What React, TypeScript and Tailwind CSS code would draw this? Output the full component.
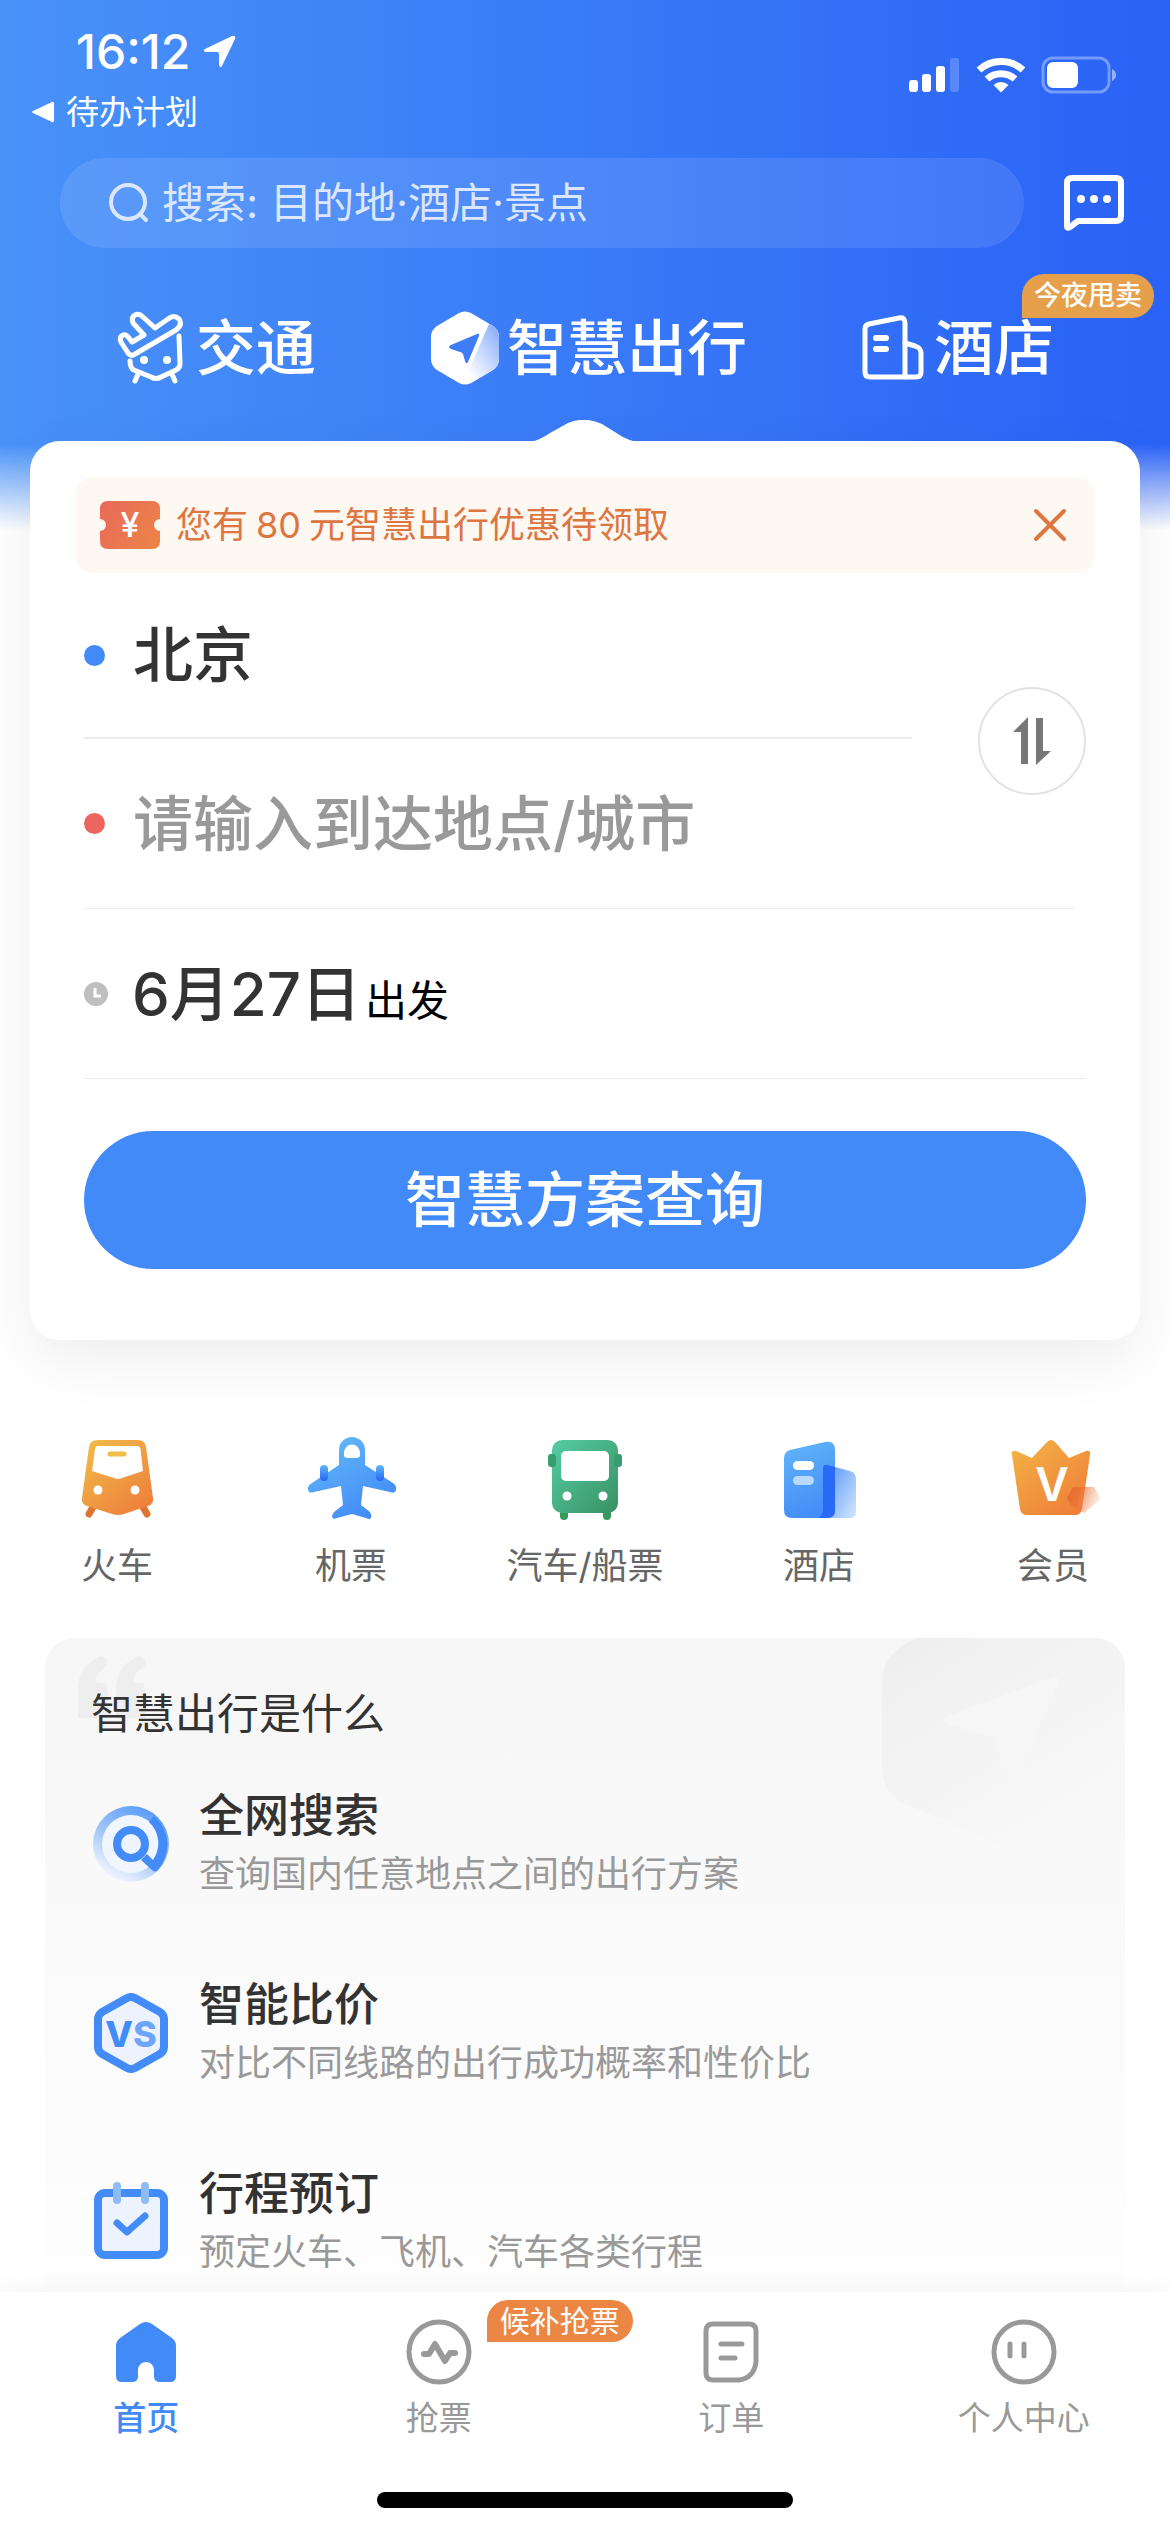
import { useState } from "react";
import type { ReactNode } from "react";

interface Service {
  label: string;
  icon: ReactNode;
}

interface Feature {
  title: string;
  text: string;
  icon: ReactNode;
}

interface Tab {
  label: string;
  icon: ReactNode;
  badge?: string;
}

function StatusIcons() {
  return (
    <svg width="210" height="38" viewBox="0 0 210 38" fill="#fff" aria-hidden="true">
      <rect x="1" y="24" width="9" height="12" rx="3" />
      <rect x="14" y="18" width="9" height="18" rx="3" />
      <rect x="28" y="10" width="9" height="26" rx="3" />
      <rect x="42" y="2" width="9" height="34" rx="3" opacity="0.2" />
      <g fill="none" stroke="#fff" strokeWidth="7">
        <path d="M71 14 A33 33 0 0 1 115 14" />
        <path d="M79 23 A21 21 0 0 1 107 23" />
      </g>
      <path d="M93 36.500 L85.500 29 A11 11 0 0 1 100.500 29Z" />
      <rect x="135" y="2" width="66" height="34" rx="10" fill="none" stroke="#fff" strokeWidth="3" opacity="0.35" />
      <rect x="139" y="6" width="31" height="26" rx="6" />
      <path d="M204 13 Q208 15 208 19 Q208 23 204 25Z" opacity="0.5" />
    </svg>
  );
}

function SearchIcon() {
  return (
    <svg width="42" height="42" viewBox="0 0 42 42" fill="none" stroke="#dbe7ff" strokeWidth="4" strokeLinecap="round" aria-hidden="true">
      <circle cx="20" cy="20" r="17" />
      <path d="M32 32 L38 38" />
    </svg>
  );
}

function MessageIcon() {
  return (
    <svg width="60" height="56" viewBox="0 0 60 56" fill="#fff" aria-hidden="true">
      <path
        d="M3 51 V8 Q3 3 8 3 H52 Q57 3 57 8 V41 Q57 46 52 46 H14 L6 52 Q3 54 3 51Z"
        fill="none"
        stroke="#fff"
        strokeWidth="6"
        strokeLinejoin="round"
      />
      <circle cx="17" cy="24" r="4" />
      <circle cx="30" cy="24" r="4" />
      <circle cx="43" cy="24" r="4" />
    </svg>
  );
}

function TrafficIcon() {
  return (
    <svg width="70" height="74" viewBox="0 0 70 74" fill="none" stroke="#fff" strokeWidth="5" strokeLinecap="round" strokeLinejoin="round" aria-hidden="true">
      <path d="M39 17 L52 8 Q58 3 63 8 Q67 14 60 19 L19 43 Q15 46 12 42 L5 31 Q3 26 7 24 Q10 23 13 27 L16 31 L28 24 L17 12 Q15 6 19 4 Q23 2 27 6Z" />
      <path d="M63 25 L64 53 Q64 57 60 59 L45 66 Q40 69 35 66 L18 59 Q14 57 14 50" />
      <path d="M22 63 L19 70" />
      <path d="M56 63 L59 70" />
      <circle cx="28" cy="49" r="4" fill="#fff" stroke="none" />
      <circle cx="51" cy="49" r="4" fill="#fff" stroke="none" />
    </svg>
  );
}

function SmartIcon() {
  return (
    <svg width="68" height="74" viewBox="0 0 68 74" aria-hidden="true">
      <defs>
        <linearGradient id="smartFold" x1="0.9" y1="0.1" x2="0.2" y2="0.9">
          <stop offset="0" stopColor="#8fb3fb" />
          <stop offset="0.5" stopColor="#c9dafd" />
          <stop offset="1" stopColor="#fff" />
        </linearGradient>
      </defs>
      <path
        d="M28 2 Q34 -1 40 2 L62 15 Q68 19 68 26 V48 Q68 55 62 59 L40 72 Q34 75 28 72 L6 59 Q0 55 0 48 V26 Q0 19 6 15Z"
        fill="#fff"
      />
      <path d="M58 13 L62 15 Q68 19 68 26 V48 Q68 55 62 59 L40 72 L32 72Z" fill="url(#smartFold)" />
      <path d="M46 23 Q49 22 48 25 L37 51 Q35 54 34 50 L32 43 Q31 41 29 41 L20 38 Q16 36 20 34Z" fill="#3f7df6" />
    </svg>
  );
}

function HotelOutlineIcon() {
  return (
    <svg width="62" height="66" viewBox="0 0 62 66" fill="none" stroke="#fff" strokeWidth="5" strokeLinecap="round" strokeLinejoin="round" aria-hidden="true">
      <path d="M3 14 Q3 10 7 9 L37 3 Q43 2 43 8 V62 H8 Q3 62 3 57Z" />
      <path d="M43 28 L53 31 Q59 33 59 38 V57 Q59 62 54 62 H43" />
      <path d="M14 23 H24 M14 34 H24" strokeWidth="6" />
    </svg>
  );
}

function TicketIcon() {
  return (
    <svg width="60" height="48" viewBox="0 0 60 48" aria-hidden="true">
      <defs>
        <linearGradient id="ticket" x1="0" y1="0" x2="1" y2="0.5">
          <stop offset="0" stopColor="#e8695a" />
          <stop offset="1" stopColor="#ec814a" />
        </linearGradient>
      </defs>
      <path
        d="M8 0 H52 Q60 0 60 8 V18 A6 6 0 0 0 60 30 V40 Q60 48 52 48 H8 Q0 48 0 40 V30 A6 6 0 0 0 0 18 V8 Q0 0 8 0Z"
        fill="url(#ticket)"
      />
      <text x="30" y="36" textAnchor="middle" fontSize="34" fontWeight="500" fill="#fff" fontFamily="Inter">
        ¥
      </text>
    </svg>
  );
}

function SwapIcon() {
  return (
    <svg width="44" height="50" viewBox="0 0 44 50" fill="#777" aria-hidden="true">
      <path d="M18 1 V48 H11 V16 H3Z" />
      <path d="M26 49 V2 H33 V35 H41Z" />
    </svg>
  );
}

function ClockIcon() {
  return (
    <svg width="24" height="24" viewBox="0 0 24 24" aria-hidden="true">
      <circle cx="12" cy="12" r="12" fill="#bfbfbf" />
      <path d="M11 6 V14 H17" fill="none" stroke="#fff" strokeWidth="3" />
    </svg>
  );
}

const services: Service[] = [
  {
    label: "火车",
    icon: (
      <>
        <linearGradient id="train" x1="0.1" y1="0" x2="0.9" y2="1">
          <stop offset="0" stopColor="#f1bb48" />
          <stop offset="1" stopColor="#ee7c3c" />
        </linearGradient>
        <path d="M18 71 L14 78 M68 71 L72 78" stroke="#dd7430" strokeWidth="7" strokeLinecap="round" />
        <path
          d="M23 4 H63 Q70 4 71 11 L78 62 Q79 68 73 70 L49 78 Q43 80 37 78 L12 70 Q6 68 7 62 L14 11 Q15 4 23 4Z"
          fill="url(#train)"
        />
        <path d="M23 10 H62 Q65 10 65.500 13 L68 35 L47 42 Q43 44 39 42 L17 35 L20 13 Q20.500 10 23 10Z" fill="#fff" />
        <path d="M35 18 H49" stroke="#f2bd49" strokeWidth="5" strokeLinecap="round" />
        <circle cx="23" cy="54" r="4.5" fill="#fff" />
        <circle cx="60" cy="54" r="4.5" fill="#fff" />
      </>
    ),
  },
  {
    label: "机票",
    icon: (
      <>
        <linearGradient id="plane" x1="0.2" y1="0" x2="0.8" y2="1">
          <stop offset="0" stopColor="#63b8f8" />
          <stop offset="1" stopColor="#4088f7" />
        </linearGradient>
        <linearGradient id="engine" x1="0" y1="0" x2="0" y2="1">
          <stop offset="0" stopColor="#62b6f8" />
          <stop offset="0.5" stopColor="#3f8df7" />
          <stop offset="1" stopColor="#2764f5" />
        </linearGradient>
        <path
          d="M30 14 A13 13 0 0 1 56 14 V29 L84 47 Q88 50 87 54 Q86 58 81 56 L54 50 L52 69 L61 76 Q63 79 62 82 Q60 84 57 82 L43 78 L28 82 Q24 84 23 81 Q23 78 25 76 L34 69 L32 50 L5 56 Q0 58 -1 54 Q-2 50 3 47 L30 29Z"
          fill="url(#plane)"
        />
        <rect x="11" y="29" width="8" height="16" rx="4" fill="url(#engine)" />
        <rect x="67" y="29" width="8" height="16" rx="4" fill="url(#engine)" />
        <path d="M35 17 A8 8.500 0 0 1 51 17 V19 Q51 22 47 22 H39 Q35 22 35 19Z" fill="#fff" />
      </>
    ),
  },
  {
    label: "汽车/船票",
    icon: (
      <>
        <linearGradient id="bus" x1="0" y1="0" x2="1" y2="1">
          <stop offset="0" stopColor="#55cca4" />
          <stop offset="1" stopColor="#389163" />
        </linearGradient>
        <path d="M21 74 V80 M64 74 V80" stroke="#36995c" strokeWidth="8" strokeLinecap="round" />
        <rect x="9" y="4" width="66" height="73" rx="10" fill="url(#bus)" />
        <rect x="5" y="18" width="8" height="13" rx="3" fill="#379f6f" />
        <rect x="71" y="18" width="8" height="13" rx="3" fill="#379f6f" />
        <rect x="18" y="15" width="48" height="30" rx="5" fill="#fff" />
        <circle cx="24" cy="60" r="4.5" fill="#fff" />
        <circle cx="60" cy="60" r="4.5" fill="#fff" />
      </>
    ),
  },
  {
    label: "酒店",
    icon: (
      <>
        <linearGradient id="tower" x1="0.2" y1="0" x2="0.5" y2="1">
          <stop offset="0" stopColor="#60b3f8" />
          <stop offset="1" stopColor="#438df8" />
        </linearGradient>
        <linearGradient id="annex" x1="0" y1="0" x2="1" y2="1">
          <stop offset="0" stopColor="#5c98f9" />
          <stop offset="1" stopColor="#d3e7fd" />
        </linearGradient>
        <path d="M58 31 L73 35 Q79 37 79 43 V76 Q79 82 73 82 H52Z" fill="url(#annex)" />
        <path d="M7 22 Q7 16 13 14 L48 6 Q58 4 58 14 V74 Q58 82 50 82 H15 Q7 82 7 74Z" fill="url(#tower)" />
        <path d="M46 33 Q46 28 51 29 L58 31 V74 Q58 82 50 82 H41 Q46 79 46 74Z" fill="#2a68f6" />
        <rect x="16" y="25" width="21" height="9" rx="4.5" fill="#fff" />
        <rect x="16" y="40" width="21" height="9" rx="4.5" fill="#fff" opacity="0.6" />
      </>
    ),
  },
  {
    label: "会员",
    icon: (
      <>
        <linearGradient id="crown" x1="0.1" y1="0" x2="0.9" y2="1">
          <stop offset="0" stopColor="#f3b244" />
          <stop offset="1" stopColor="#ee7c39" />
        </linearGradient>
        <linearGradient id="gem" x1="0" y1="0" x2="1" y2="0.3">
          <stop offset="0" stopColor="#ea6728" />
          <stop offset="0.4" stopColor="#ea6f34" stopOpacity="0.75" />
          <stop offset="1" stopColor="#f2a273" stopOpacity="0.2" />
        </linearGradient>
        <path
          d="M5 15 L21 22 L36 6 Q40 2 44 6 L58 22 L75 15 Q80 14 79 19 L71 73 Q70 79 64 79 H16 Q10 79 9 73 L1 19 Q0 14 5 15Z"
          fill="url(#crown)"
        />
        <path d="M62 51 H83 L90 63 L73 77 L60 69 L56 62Z" fill="url(#gem)" />
        <text x="41" y="65" textAnchor="middle" fontSize="46" fontWeight="600" fill="#fff" fontFamily="Inter">
          V
        </text>
      </>
    ),
  },
];

const features: Feature[] = [
  {
    title: "全网搜索",
    text: "查询国内任意地点之间的出行方案",
    icon: (
      <>
        <linearGradient id="ring" x1="0.85" y1="0.1" x2="0.35" y2="1">
          <stop offset="0" stopColor="#5a9cf8" />
          <stop offset="0.55" stopColor="#a3c6f9" />
          <stop offset="1" stopColor="#f2f6fd" />
        </linearGradient>
        <circle cx="40" cy="40" r="38" fill="url(#ring)" />
        <circle cx="40" cy="40" r="29" fill="#f0f5fe" />
        <path d="M63 12 A38 38 0 0 1 67 66 Q64 69 61 66 L50 56 L56 50 L62 56 A29 29 0 0 0 58 18Z" fill="#438cf8" />
        <circle cx="40" cy="40" r="14" fill="#eef4fe" stroke="#438cf8" strokeWidth="8" />
      </>
    ),
  },
  {
    title: "智能比价",
    text: "对比不同线路的出行成功概率和性价比",
    icon: (
      <>
        <path
          d="M36 5 Q40 3 44 5 L69 19 Q73 22 73 26 V54 Q73 58 69 61 L44 75 Q40 77 36 75 L11 61 Q7 58 7 54 V26 Q7 22 11 19Z"
          fill="#edf3fe"
          stroke="#438cf8"
          strokeWidth="8"
        />
        <text x="40" y="54" textAnchor="middle" fontSize="36" fontWeight="800" fill="#438cf8" fontFamily="Inter">
          V<tspan fillOpacity="0.75">S</tspan>
        </text>
      </>
    ),
  },
  {
    title: "行程预订",
    text: "预定火车、飞机、汽车各类行程",
    icon: (
      <>
        <rect x="7" y="11" width="66" height="62" rx="7" fill="#edf3fe" stroke="#438cf8" strokeWidth="8" />
        <path d="M26 4 V18 M54 4 V18" stroke="#8dbcfa" strokeWidth="8" strokeLinecap="round" />
        <path d="M26 41 L36 50 L54 34" fill="none" stroke="#438cf8" strokeWidth="7" strokeLinecap="round" strokeLinejoin="round" />
      </>
    ),
  },
];

const tabs: Tab[] = [
  {
    label: "首页",
    icon: (
      <path
        d="M26 4 Q32 0 38 4 L58 18 Q62 21 62 26 V56 Q62 62 56 62 H46 Q40 62 40 56 V50 A8 8 0 0 0 24 50 V56 Q24 62 18 62 H8 Q2 62 2 56 V26 Q2 21 6 18Z"
        fill="currentColor"
      />
    ),
  },
  {
    label: "抢票",
    badge: "候补抢票",
    icon: (
      <g fill="none" stroke="currentColor" strokeWidth="5" strokeLinecap="round" strokeLinejoin="round">
        <circle cx="32" cy="32" r="30" />
        <path d="M17 34 H22 L28 24 L38 41 L43 33 H48" strokeWidth="6" />
      </g>
    ),
  },
  {
    label: "订单",
    icon: (
      <g fill="none" stroke="currentColor" strokeWidth="5" strokeLinecap="round">
        <path d="M14 4 H50 Q57 4 57 11 V42 Q55 58 40 60 H14 Q7 60 7 53 V11 Q7 4 14 4Z" />
        <path d="M22 24 H43 M22 38 H36" />
      </g>
    ),
  },
  {
    label: "个人中心",
    icon: (
      <g fill="none" stroke="currentColor" strokeWidth="5" strokeLinecap="round">
        <circle cx="32" cy="32" r="30" />
        <path d="M18 24 V36 M32 24 V36" />
      </g>
    ),
  },
];

function Header() {
  return (
    <header className="pb-14 pt-7 text-white">
      <div className="flex items-start justify-between pl-8 pr-13">
        <div className="flex flex-col">
          <div className="flex items-center gap-3 pl-11 text-5xl font-medium leading-12">
            <span>16:12</span>
            <svg width="34" height="34" viewBox="0 0 34 34" fill="#fff" aria-hidden="true">
              <path d="M30 1 Q34 0 33 4 L20 31 Q18 34 17 30 V19 Q17 17 15 17 H4 Q0 16 3 14Z" />
            </svg>
          </div>
          <a href="#back" className="mt-4 flex items-center gap-3 text-[33px] leading-10">
            <svg width="22" height="22" viewBox="0 0 22 22" fill="#fff" aria-hidden="true">
              <path d="M20 1 Q22 0 22 3 V19 Q22 22 20 21 L1 12 Q-1 11 1 10Z" />
            </svg>
            待办计划
          </a>
        </div>
        <div className="pt-7">
          <StatusIcons />
        </div>
      </div>

      <div className="mt-[26px] flex items-center gap-10 pl-15 pr-[46px]">
        <label className="flex h-[90px] flex-1 items-center gap-3 rounded-full bg-white/10 pl-12">
          <SearchIcon />
          <input
            type="search"
            aria-label="搜索"
            placeholder="搜索: 目的地·酒店·景点"
            className="min-w-0 flex-1 bg-transparent text-[42px] leading-15 outline-none placeholder:text-[#dbe7ff]"
          />
        </label>
        <button type="button" aria-label="消息">
          <MessageIcon />
        </button>
      </div>

      <nav className="mt-[63px] flex items-center justify-between px-[116px] text-[60px] font-medium leading-18">
        <a href="#traffic" className="flex items-center gap-[10px]">
          <TrafficIcon />
          交通
        </a>
        <a href="#smart" className="flex items-center gap-2">
          <SmartIcon />
          智慧出行
        </a>
        <a href="#hotel" className="relative flex items-center gap-[10px]">
          <HotelOutlineIcon />
          酒店
          <span className="absolute -right-25 -top-[38px] rounded-3xl rounded-bl-none bg-[#e6a04b] px-3 text-[27px] leading-11">
            今夜甩卖
          </span>
        </a>
      </nav>
    </header>
  );
}

function TripForm() {
  const [from, setFrom] = useState("北京");
  const [to, setTo] = useState("");
  const [noticeOpen, setNoticeOpen] = useState(true);

  function swap() {
    setFrom(to);
    setTo(from);
  }

  return (
    <section className="relative mx-[30px] rounded-[30px] bg-white px-[46px] pb-[71px] pt-9 shadow-[0_20px_60px_rgba(0,0,0,0.07)]">
      <svg className="absolute -top-[21px] left-1/2 -translate-x-1/2" width="110" height="22" viewBox="0 0 110 22" fill="#fff" aria-hidden="true">
        <path d="M0 22 Q10 20 20 13 L38 3 Q55 -4 72 4 L88 14 Q98 21 110 22Z" />
      </svg>

      {noticeOpen && (
        <div className="flex h-24 items-center rounded-2xl bg-[#fdf8f2] px-6 text-[#dd7640]">
          <TicketIcon />
          <p className="ml-4 flex-1 text-[36px] leading-12">
            您有<span className="mx-2">80</span>元智慧出行优惠待领取
          </p>
          <button type="button" aria-label="关闭" onClick={() => setNoticeOpen(false)}>
            <svg width="40" height="40" viewBox="0 0 40 40" stroke="currentColor" strokeWidth="4" strokeLinecap="round" aria-hidden="true">
              <path d="M6 6 L34 34 M34 6 L6 34" />
            </svg>
          </button>
        </div>
      )}

      <form className="px-2" onSubmit={(e) => e.preventDefault()}>
        <div className="relative">
          <label className="mr-[174px] flex h-[166px] items-center gap-7 border-b-2 border-[#ececec]">
            <span className="size-[21px] rounded-full bg-[#428af8]" />
            <input
              aria-label="出发地点"
              value={from}
              onChange={(e) => setFrom(e.target.value)}
              placeholder="请输入出发地点/城市"
              className="min-w-0 flex-1 text-[60px] font-medium leading-20 text-[#333] outline-none placeholder:text-[#999]"
            />
          </label>
          <label className="mr-3 flex h-[170px] items-center gap-7 border-b border-[#ececec]">
            <span className="size-[21px] rounded-full bg-[#ee6560]" />
            <input
              aria-label="到达地点"
              value={to}
              onChange={(e) => setTo(e.target.value)}
              placeholder="请输入到达地点/城市"
              className="min-w-0 flex-1 text-[60px] font-medium leading-20 text-[#333] outline-none placeholder:text-[#999]"
            />
          </label>
          <button
            type="button"
            aria-label="交换出发地和到达地"
            onClick={swap}
            className="absolute right-0 top-[114px] flex size-[108px] items-center justify-center rounded-full border-2 border-[#e3e3e3] bg-white"
          >
            <SwapIcon />
          </button>
        </div>
        <button type="button" className="flex h-[170px] w-full items-center gap-6 border-b border-[#ececec] text-left">
          <ClockIcon />
          <span className="flex items-baseline gap-1">
            <span className="text-[60px] font-medium leading-20 text-[#333]">6月27日</span>
            <span className="text-[42px] text-black">出发</span>
          </span>
        </button>
        <button
          type="submit"
          className="mt-13 h-[138px] w-full rounded-full bg-[#428af8] text-[60px] font-medium leading-20 text-white"
        >
          智慧方案查询
        </button>
      </form>
    </section>
  );
}

function Services() {
  return (
    <nav className="mt-24 grid grid-cols-5">
      {services.map((service) => (
        <a key={service.label} href="#service" className="flex flex-col items-center gap-[22px] text-[36px] leading-12 text-[#666]">
          <svg width="84" height="84" viewBox="0 0 84 84" className="overflow-visible" aria-hidden="true">
            {service.icon}
          </svg>
          {service.label}
        </a>
      ))}
    </nav>
  );
}

function About() {
  return (
    <section className="relative mx-[45px] mt-12 flex-1 overflow-hidden rounded-t-[30px] bg-linear-to-b from-[#f6f6f6] to-[#fefefe] px-[46px] pb-3 pt-12">
      <svg className="absolute left-8 top-4" width="70" height="66" viewBox="0 0 70 66" fill="#eeeeee" aria-hidden="true">
        <path d="M24 2 Q32 4 30 12 Q20 18 18 26 Q19 30 28 29 Q31 34 31 44 V64 H1 V32 Q3 10 24 2Z" />
        <path d="M62 2 Q70 4 68 12 Q58 18 56 26 Q57 30 66 29 Q69 34 69 44 V64 H39 V32 Q41 10 62 2Z" />
      </svg>
      <svg className="absolute right-0 top-0" width="244" height="210" viewBox="0 0 244 210" aria-hidden="true">
        <defs>
          <linearGradient id="watermark" x1="0" y1="0" x2="0.7" y2="1">
            <stop offset="0" stopColor="#eeeeee" />
            <stop offset="1" stopColor="#f9f9f9" />
          </linearGradient>
        </defs>
        <path d="M36 0 H244 V150 L150 205 Q130 214 110 203 L20 164 Q1 152 1 130 V42 Q2 14 36 0Z" fill="url(#watermark)" />
        <path d="M172 39 Q178 37 177 46 L140 132 Q130 144 122 132 L114 100 L66 86 Q60 82 66 78Z" fill="#f6f6f6" />
      </svg>
      <h2 className="relative text-[42px] leading-14 text-[#333]">智慧出行是什么</h2>
      <ul className="relative mt-11 flex flex-col gap-[73px]">
        {features.map((feature) => (
          <li key={feature.title} className="flex items-center gap-7">
            <svg width="80" height="80" viewBox="0 0 80 80" aria-hidden="true">
              {feature.icon}
            </svg>
            <div>
              <h3 className="text-[45px] font-medium leading-15 text-[#333]">{feature.title}</h3>
              <p className="text-[36px] leading-14 text-[#999]">{feature.text}</p>
            </div>
          </li>
        ))}
      </ul>
    </section>
  );
}

function TabBar() {
  const [active, setActive] = useState("首页");

  return (
    <footer className="relative bg-white pb-6 pt-7 shadow-[0_-4px_24px_rgba(0,0,0,0.04)]">
      <nav className="grid grid-cols-4">
        {tabs.map((tab) => (
          <button
            key={tab.label}
            type="button"
            onClick={() => setActive(tab.label)}
            className={`flex flex-col items-center gap-3 text-[33px] leading-11 ${
              tab.label === active ? "font-medium text-[#428af8]" : "text-[#999]"
            }`}
          >
            <span className="relative">
              <svg width="64" height="64" viewBox="0 0 64 64" className="block overflow-visible" aria-hidden="true">
                {tab.icon}
              </svg>
              {tab.badge && (
                <span className="absolute -top-5 left-20 whitespace-nowrap rounded-3xl rounded-bl-none bg-[#ec8644] px-[13px] text-[30px] leading-[42px] text-white">
                  {tab.badge}
                </span>
              )}
            </span>
            {tab.label}
          </button>
        ))}
      </nav>
      <div className="mx-auto mt-13 h-4 w-[416px] rounded-full bg-black" />
    </footer>
  );
}

export default function App() {
  return (
    <div className="flex min-h-screen flex-col bg-[linear-gradient(to_bottom,transparent_444px,white_530px),linear-gradient(to_right,#4992f8,#2a62f6)] font-[Inter,'Noto_Sans_CJK_SC',sans-serif]">
      <Header />
      <main className="flex flex-1 flex-col">
        <TripForm />
        <Services />
        <About />
      </main>
      <TabBar />
    </div>
  );
}
